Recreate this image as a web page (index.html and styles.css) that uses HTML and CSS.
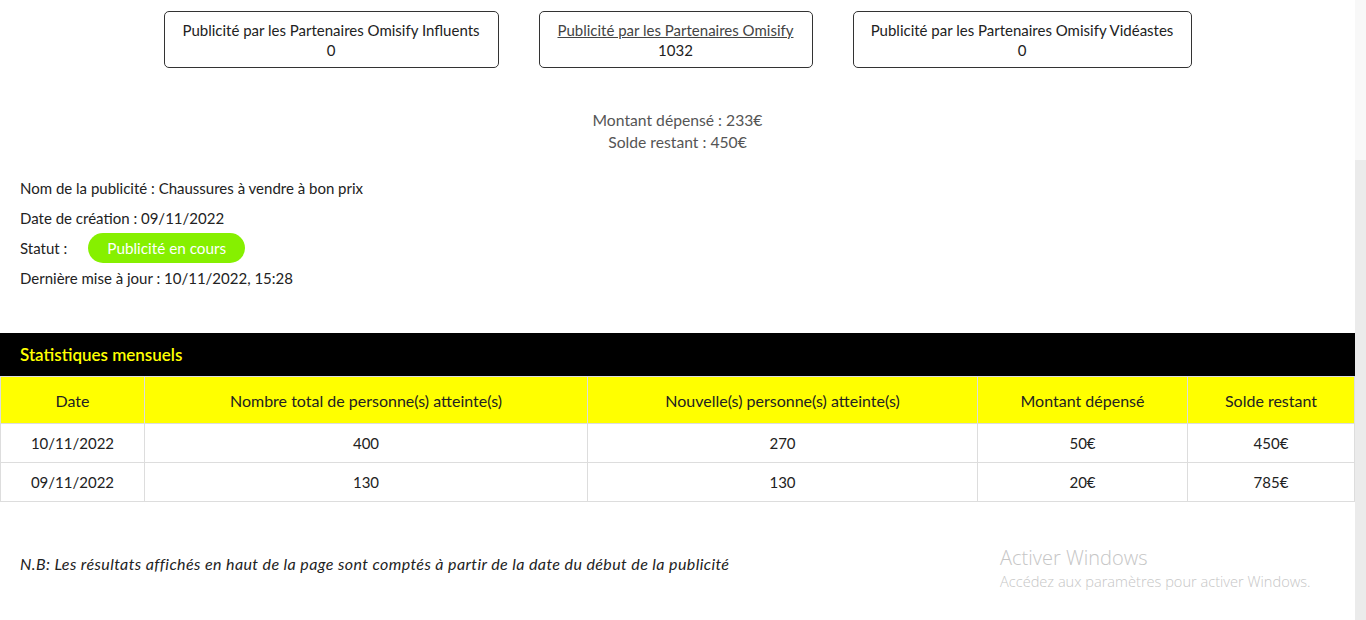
FILE: index.html
```html
<!DOCTYPE html>
<html lang="fr">
<head>
<meta charset="utf-8">
<title>Statistiques publicité</title>
<link rel="stylesheet" href="styles.css">
</head>
<body>
<div class="page">
  <main class="main">
    <section class="cards">
      <div class="card card-a">
        <span>Publicité par les Partenaires Omisify Influents</span>
        <span>0</span>
      </div>
      <div class="card card-b">
        <a class="card-link" href="#">Publicité par les Partenaires Omisify</a>
        <span>1032</span>
      </div>
      <div class="card card-c">
        <span>Publicité par les Partenaires Omisify Vidéastes</span>
        <span>0</span>
      </div>
    </section>

    <section class="totals">
      <div>Montant dépensé : 233€</div>
      <div>Solde restant : 450€</div>
    </section>

    <section class="info">
      <div class="info-line">Nom de la publicité : Chaussures à vendre à bon prix</div>
      <div class="info-line">Date de création : 09/11/2022</div>
      <div class="info-line">Statut : <span class="pill">Publicité en cours</span></div>
      <div class="info-line">Dernière mise à jour : 10/11/2022, 15:28</div>
    </section>

    <section class="stats">
      <h2 class="stats-title">Statistiques mensuels</h2>
      <table class="stats-table">
        <colgroup>
          <col class="c1"><col class="c2"><col class="c3"><col class="c4"><col class="c5">
        </colgroup>
        <thead>
          <tr>
            <th>Date</th>
            <th>Nombre total de personne(s) atteinte(s)</th>
            <th>Nouvelle(s) personne(s) atteinte(s)</th>
            <th>Montant dépensé</th>
            <th>Solde restant</th>
          </tr>
        </thead>
        <tbody>
          <tr><td>10/11/2022</td><td>400</td><td>270</td><td>50€</td><td>450€</td></tr>
          <tr><td>09/11/2022</td><td>130</td><td>130</td><td>20€</td><td>785€</td></tr>
        </tbody>
      </table>
    </section>

    <p class="note">N.B: Les résultats affichés en haut de la page sont comptés à partir de la date du début de la publicité</p>

    <div class="watermark">
      <div class="wm-title">Activer Windows</div>
      <div class="wm-sub">Accédez aux paramètres pour activer Windows.</div>
    </div>
  </main>
  <div class="scrollbar"><div class="thumb"></div></div>
</div>
</body>
</html>
```
FILE: styles.css
```css
* { box-sizing: border-box; }
html, body { margin: 0; padding: 0; }
body {
  font-family: "Lato", "Open Sans", sans-serif;
  font-size: 15px;
  color: #222;
  background: #fff;
  overflow: hidden;
}
.page {
  display: flex;
  height: 620px;
}
.main {
  flex: 1;
  position: relative;
}
.scrollbar {
  width: 12px;
  background: #ebebeb;
  display: flex;
  flex-direction: column;
}
.thumb {
  height: 160px;
  background: #f8f8f8;
}

.cards {
  display: flex;
  justify-content: center;
  gap: 40px;
  padding-top: 11px;
}
.card {
  height: 57px;
  border: 1px solid #333;
  border-radius: 5px;
  display: flex;
  flex-direction: column;
  align-items: center;
  justify-content: center;
  line-height: 20px;
  color: #222;
}
.card-a { width: 335px; }
.card-b { width: 274px; }
.card-c { width: 339px; }
.card-link {
  color: #444;
  text-decoration: underline;
}

.totals {
  margin-top: 41px;
  text-align: center;
  line-height: 22px;
  font-size: 15.7px;
  color: #555;
}

.info {
  margin-top: 20px;
  padding-left: 20px;
}
.info-line {
  height: 30px;
  line-height: 30px;
  display: flex;
  align-items: center;
}
.pill {
  display: inline-flex;
  align-items: center;
  justify-content: center;
  width: 157px;
  height: 30px;
  margin-left: 21px;
  border-radius: 15px;
  background: #86f000;
  color: #fff;
  font-size: 15.3px;
}

.stats {
  margin-top: 40px;
}
.stats-title {
  margin: 0;
  height: 43px;
  line-height: 43px;
  padding-left: 20px;
  background: #000;
  color: #ffff00;
  font-size: 17px;
  font-weight: 600;
}
.stats-table {
  width: 1354px;
  border-collapse: collapse;
  table-layout: fixed;
}
.c1 { width: 144px; }
.c2 { width: 443px; }
.c3 { width: 390px; }
.c4 { width: 210px; }
.c5 { width: 167px; }
.stats-table th,
.stats-table td {
  border: 1px solid #ddd;
  text-align: center;
  font-weight: 400;
  padding: 0;
}
.stats-table th {
  height: 47px;
  background: #ffff00;
  color: #222;
  font-size: 16px;
}
.stats-table td {
  height: 39px;
}

.note {
  margin: 47px 0 0;
  padding-left: 20px;
  line-height: 30px;
  font-size: 16px;
  letter-spacing: 0.4px;
  font-style: italic;
}

.watermark {
  position: absolute;
  left: 1000px;
  top: 545px;
  color: #c6c6c6;
  font-family: "Open Sans", sans-serif;
  font-weight: 300;
}
.wm-title {
  font-size: 20px;
  line-height: 26px;
}
.wm-sub {
  font-size: 14.6px;
  line-height: 20px;
}
```
